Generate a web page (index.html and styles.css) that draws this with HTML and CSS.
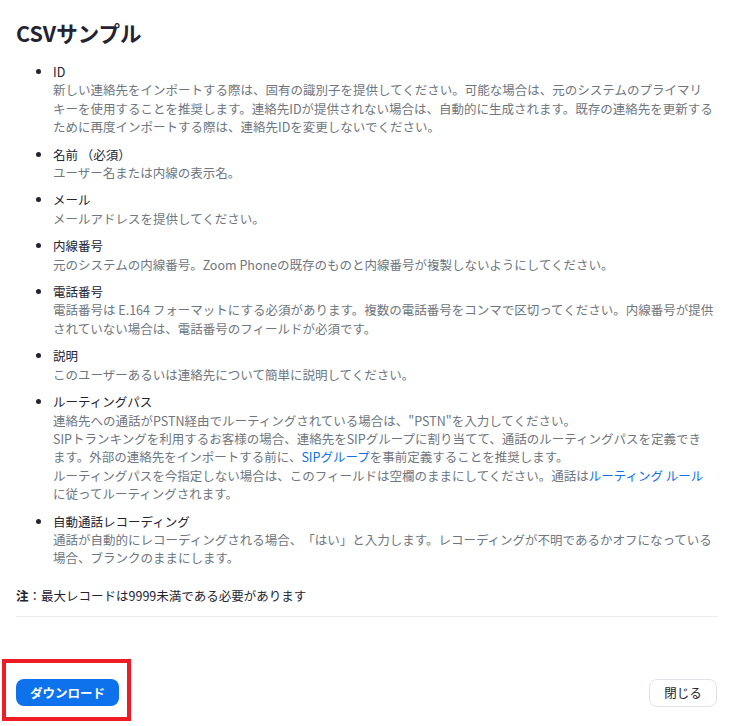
FILE: index.html
```html
<!DOCTYPE html>
<html lang="ja">
<head>
<meta charset="utf-8">
<link rel="stylesheet" href="styles.css">
</head>
<body>
<div class="page">
  <h1 class="title">CSVサンプル</h1>
  <ul class="fields">
    <li>
      <div class="name">ID</div>
      <div class="desc">新しい連絡先をインポートする際は、固有の識別子を提供してください。可能な場合は、元のシステムのプライマリ<br>キーを使用することを推奨します。連絡先IDが提供されない場合は、自動的に生成されます。既存の連絡先を更新する<br>ために再度インポートする際は、連絡先IDを変更しないでください。</div>
    </li>
    <li>
      <div class="name">名前 （必須）</div>
      <div class="desc">ユーザー名または内線の表示名。</div>
    </li>
    <li>
      <div class="name">メール</div>
      <div class="desc">メールアドレスを提供してください。</div>
    </li>
    <li>
      <div class="name">内線番号</div>
      <div class="desc">元のシステムの内線番号。Zoom Phoneの既存のものと内線番号が複製しないようにしてください。</div>
    </li>
    <li>
      <div class="name">電話番号</div>
      <div class="desc">電話番号は E.164 フォーマットにする必須があります。複数の電話番号をコンマで区切ってください。内線番号が提供<br>されていない場合は、電話番号のフィールドが必須です。</div>
    </li>
    <li>
      <div class="name">説明</div>
      <div class="desc">このユーザーあるいは連絡先について簡単に説明してください。</div>
    </li>
    <li>
      <div class="name">ルーティングパス</div>
      <div class="desc">連絡先への通話がPSTN経由でルーティングされている場合は、"PSTN"を入力してください。<br>SIPトランキングを利用するお客様の場合、連絡先をSIPグループに割り当てて、通話のルーティングパスを定義でき<br>ます。外部の連絡先をインポートする前に、<a class="link" href="#">SIPグループ</a>を事前定義することを推奨します。<br>ルーティングパスを今指定しない場合は、このフィールドは空欄のままにしてください。通話は<a class="link" href="#">ルーティング ルール</a><br>に従ってルーティングされます。</div>
    </li>
    <li>
      <div class="name">自動通話レコーディング</div>
      <div class="desc">通話が自動的にレコーディングされる場合、「はい」と入力します。レコーディングが不明であるかオフになっている<br>場合、ブランクのままにします。</div>
    </li>
  </ul>
  <p class="note"><span class="note-label">注</span>：最大レコードは9999未満である必要があります</p>
  <div class="footer">
    <div class="primary-wrap">
      <button class="btn btn-primary" type="button">ダウンロード</button>
      <span class="highlight"></span>
    </div>
    <button class="btn btn-secondary" type="button">閉じる</button>
  </div>
</div>
</body>
</html>
```

FILE: styles.css
```css
html, body {
  margin: 0;
  padding: 0;
  background: #ffffff;
}

body {
  font-family: "Noto Sans CJK JP", "Noto Sans", sans-serif;
  color: #232333;
  font-size: 12.5px;
  text-spacing-trim: space-all;
}

.page {
  padding: 18px 22px 20px 16px;
}

.title {
  margin: 0;
  font-size: 21.5px;
  line-height: 30px;
  font-weight: 700;
  color: #232333;
}

.fields {
  margin: 15px 0 0 0;
  padding-left: 37px;
  list-style: disc;
}

.fields li {
  margin-bottom: 9px;
  line-height: 18.4px;
}

.name {
  color: #232333;
}

.desc {
  color: #6e7680;
  white-space: nowrap;
}

.link {
  color: #0e71eb;
  text-decoration: none;
}

.note {
  margin: 19px 0 0 0;
  line-height: 18px;
  padding-bottom: 11px;
  border-bottom: 1px solid #ebebf0;
  color: #232333;
}

.note-label {
  font-weight: 700;
}

.footer {
  display: flex;
  justify-content: space-between;
  align-items: center;
  margin-top: 62px;
  padding-right: 1px;
}

.primary-wrap {
  position: relative;
  display: flex;
}

.highlight {
  position: absolute;
  left: -14px;
  top: -20px;
  width: 121px;
  height: 54px;
  border: 4px solid #ee1c25;
  pointer-events: none;
}

.btn {
  font-family: "Noto Sans CJK JP", "Noto Sans", sans-serif;
  font-size: 12.5px;
  line-height: 18px;
  border-radius: 8px;
  cursor: pointer;
  text-spacing-trim: space-all;
}

.btn-primary {
  width: 103px;
  height: 27px;
  padding: 0;
  border: none;
  background: #0e72ed;
  color: #ffffff;
  font-weight: 700;
}

.btn-secondary {
  width: 68px;
  height: 28px;
  padding: 0;
  border: 1px solid #dfe3e8;
  background: #ffffff;
  color: #232333;
}
```
